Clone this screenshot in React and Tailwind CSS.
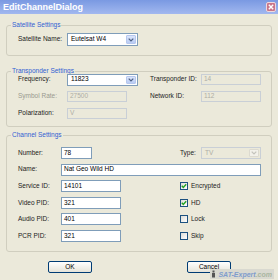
import React from "react";

function Arrow({ disabled }) {
  return (
    <div
      className={`h-full w-[10px] flex items-center justify-center rounded-[1px] ${
        disabled ? "bg-[#f2f1ea] border border-[#dcdad0]" : "bg-linear-to-b from-[#dbe5fb] to-[#b9cbf3] border border-[#b6c7ee]"
      }`}
    >
      <svg width="6" height="4" viewBox="0 0 6 4">
        <path d="M0.7 0.6 L3 3 L5.3 0.6" fill="none" stroke={disabled ? "#c4c3bb" : "#4d6185"} strokeWidth="1.2" />
      </svg>
    </div>
  );
}

function Combo({ w, h, value, disabled }) {
  return (
    <div
      className={`${w} ${h} flex items-stretch border p-[1px] ${
        disabled ? "border-[#c9cfd6] bg-[#ebe9da] text-[#aeada4]" : "border-[#7f9db9] bg-white text-black"
      }`}
    >
      <div className="flex-1 flex items-center pl-[2px]">{value}</div>
      <Arrow disabled={disabled} />
    </div>
  );
}

function TextBox({ w, value, disabled, h = "h-[12px]" }) {
  return (
    <div
      className={`${w} ${h} flex items-center pl-[2px] border ${
        disabled ? "border-[#c9cfd6] bg-[#ebe9da] text-[#aeada4]" : "border-[#7f9db9] bg-white text-black"
      }`}
    >
      {value}
    </div>
  );
}

function Check({ checked, label }) {
  return (
    <div className="flex items-center gap-[3px]">
      <div className="w-[8px] h-[8px] border border-[#1c5180] bg-linear-to-br from-[#dcdcd7] to-white flex items-center justify-center">
        {checked && (
          <svg width="6" height="6" viewBox="0 0 6 6">
            <path d="M0.8 2.8 L2.3 4.4 L5.2 1.2" fill="none" stroke="#21a121" strokeWidth="1.4" />
          </svg>
        )}
      </div>
      <span>{label}</span>
    </div>
  );
}

function Button({ children }) {
  return (
    <div className="w-[44px] h-[12px] rounded-[2px] border border-[#003c74] bg-linear-to-b from-white to-[#e6e4d9] flex items-center justify-center text-black">
      {children}
    </div>
  );
}

export default function App() {
  return (
    <div className="relative w-[278px] h-[280px] overflow-hidden bg-[#ebe9da] font-['Liberation_Sans',Arial,sans-serif] text-[6.5px] leading-none text-[#222]">
      {/* Title bar */}
      <div className="h-[14px] bg-linear-to-b from-[#7a99e2] to-[#a2b8ef] flex items-center justify-between pl-[3px] pr-[2px]">
        <span className="text-white font-bold text-[9px] leading-none">EditChannelDialog</span>
        <div className="w-[10px] h-[10px] rounded-[2px] border border-[#eed9de] bg-[#c8768a] flex items-center justify-center">
          <svg width="6" height="6" viewBox="0 0 6 6">
            <path d="M0.8 0.8 L5.2 5.2 M5.2 0.8 L0.8 5.2" stroke="white" strokeWidth="1.4" />
          </svg>
        </div>
      </div>

      {/* Satellite Settings */}
      <fieldset className="mx-[6px] mt-[8px] border border-[#d0cebf] rounded-[3px] pl-[11px] pr-[10px] pt-[5px] pb-[9px]">
        <legend className="-ml-[7px] px-[1px] leading-[6px] text-[#3160d3]">Satellite Settings</legend>
        <div className="flex items-center">
          <div className="w-[49px]">Satellite Name:</div>
          <Combo w="w-[71px]" h="h-[13px]" value="Eutelsat W4" />
        </div>
      </fieldset>

      {/* Transponder Settings */}
      <fieldset className="mx-[6px] mt-[12px] border border-[#d0cebf] rounded-[3px] pl-[11px] pr-[10px] pt-0 pb-[7px]">
        <legend className="-ml-[7px] px-[1px] leading-[6px] text-[#3160d3]">Transponder Settings</legend>
        <div className="grid grid-cols-[132px_1fr] gap-y-[6px]">
          <div className="flex items-center h-[11px]">
            <div className="w-[49px]">Frequency:</div>
            <Combo w="w-[71px]" h="h-[12px]" value="11823" />
          </div>
          <div className="flex items-center h-[11px]">
            <div className="w-[51px]">Transponder ID:</div>
            <TextBox w="w-[60px]" h="h-[11px]" value="14" disabled />
          </div>
          <div className="flex items-center h-[11px]">
            <div className="w-[49px] text-[#9a998f]">Symbol Rate:</div>
            <TextBox w="w-[60px]" h="h-[11px]" value="27500" disabled />
          </div>
          <div className="flex items-center h-[11px]">
            <div className="w-[51px]">Network ID:</div>
            <TextBox w="w-[60px]" h="h-[11px]" value="112" disabled />
          </div>
          <div className="flex items-center h-[11px]">
            <div className="w-[49px]">Polarization:</div>
            <TextBox w="w-[60px]" h="h-[11px]" value="V" disabled />
          </div>
        </div>
      </fieldset>

      {/* Channel Settings */}
      <fieldset className="mx-[6px] mt-[5px] border border-[#d0cebf] rounded-[3px] pl-[11px] pr-[10px] pt-[9px] pb-[9px]">
        <legend className="-ml-[7px] px-[1px] leading-[6px] text-[#3160d3]">Channel Settings</legend>
        <div className="flex flex-col gap-[4.6px]">
          <div className="grid grid-cols-[162px_1fr] h-[12px] items-center">
            <div className="flex items-center">
              <div className="w-[43px]">Number:</div>
              <TextBox w="w-[31px]" value="78" />
            </div>
            <div className="flex items-center">
              <div className="w-[21px]">Type:</div>
              <Combo w="w-[60px]" h="h-[12px]" value="TV" disabled />
            </div>
          </div>
          <div className="flex items-center h-[12px]">
            <div className="w-[43px]">Name:</div>
            <TextBox w="w-[200px]" value="Nat Geo Wild HD" />
          </div>
          <div className="grid grid-cols-[162px_1fr] h-[12px] items-center">
            <div className="flex items-center">
              <div className="w-[43px]">Service ID:</div>
              <TextBox w="w-[60px]" value="14101" />
            </div>
            <Check checked label="Encrypted" />
          </div>
          <div className="grid grid-cols-[162px_1fr] h-[12px] items-center">
            <div className="flex items-center">
              <div className="w-[43px]">Video PID:</div>
              <TextBox w="w-[60px]" value="321" />
            </div>
            <Check checked label="HD" />
          </div>
          <div className="grid grid-cols-[162px_1fr] h-[12px] items-center">
            <div className="flex items-center">
              <div className="w-[43px]">Audio PID:</div>
              <TextBox w="w-[60px]" value="401" />
            </div>
            <Check label="Lock" />
          </div>
          <div className="grid grid-cols-[162px_1fr] h-[12px] items-center">
            <div className="flex items-center">
              <div className="w-[43px]">PCR PID:</div>
              <TextBox w="w-[60px]" value="321" />
            </div>
            <Check label="Skip" />
          </div>
        </div>
      </fieldset>

      {/* Buttons */}
      <div className="mt-[9px] pl-[48px] flex gap-[95px]">
        <Button>OK</Button>
        <Button>Cancel</Button>
      </div>

      {/* Watermark */}
      <div className="absolute right-[4px] bottom-[1px] h-[10px] flex items-center gap-[2px] pl-[1px] pr-[2px] bg-[#d9d9d0]">
        <svg width="5" height="8" viewBox="0 0 5 8">
          <rect x="1.5" y="0.5" width="2" height="2" fill="#555" />
          <rect x="1" y="3" width="3" height="4.5" fill="#555" />
        </svg>
        <span className="italic font-bold text-[7px] text-[#7f9ccd]">
          SAT-Expert<span className="text-[#a9b6a0]">.com</span>
        </span>
      </div>
    </div>
  );
}
